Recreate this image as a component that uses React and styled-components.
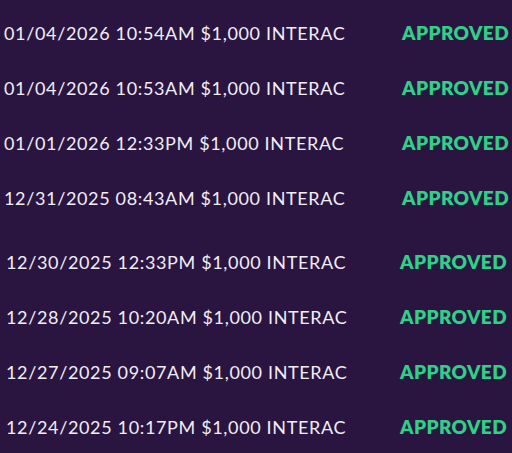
import React from "react";
import styled, { createGlobalStyle } from "styled-components";

const Global = createGlobalStyle`
  html, body { margin: 0; padding: 0; background: #2a1541; }
  body { width: 512px; height: 453px; overflow: hidden; }
`;

const Page = styled.div`
  display: flex;
  flex-direction: column;
  gap: 9px;
  padding-top: 5px;
  font-family: Lato, "Liberation Sans", sans-serif;
`;

const Section = styled.div`
  display: flex;
  flex-direction: column;
  padding-left: ${(p) => p.$left}px;
  padding-right: ${(p) => p.$right}px;
`;

const Row = styled.div`
  height: 55px;
  display: flex;
  align-items: center;
  justify-content: space-between;
`;

const Info = styled.span`
  color: #f1edf5;
  font-size: 18px;
  font-weight: 400;
  letter-spacing: 0.65px;
  white-space: nowrap;
`;

const Status = styled.span`
  color: #2fd088;
  font-size: 19px;
  font-weight: 800;
  letter-spacing: 0.4px;
  white-space: nowrap;
`;

const groups = [
  {
    left: 4,
    right: 3,
    rows: [
      "01/04/2026 10:54AM $1,000 INTERAC",
      "01/04/2026 10:53AM $1,000 INTERAC",
      "01/01/2026 12:33PM $1,000 INTERAC",
      "12/31/2025 08:43AM $1,000 INTERAC",
    ],
  },
  {
    left: 6,
    right: 5,
    rows: [
      "12/30/2025 12:33PM $1,000 INTERAC",
      "12/28/2025 10:20AM $1,000 INTERAC",
      "12/27/2025 09:07AM $1,000 INTERAC",
      "12/24/2025 10:17PM $1,000 INTERAC",
    ],
  },
];

export default function App() {
  return (
    <>
      <Global />
      <Page>
        {groups.map((g, i) => (
          <Section key={i} $left={g.left} $right={g.right}>
            {g.rows.map((r) => (
              <Row key={r}>
                <Info>{r}</Info>
                <Status>APPROVED</Status>
              </Row>
            ))}
          </Section>
        ))}
      </Page>
    </>
  );
}
